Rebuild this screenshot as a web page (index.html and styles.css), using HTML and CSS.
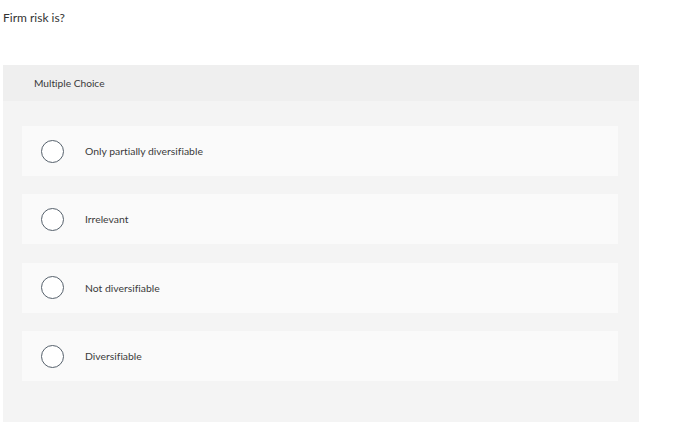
FILE: index.html
```html
<!DOCTYPE html>
<html>
<head>
<meta charset="utf-8">
<link rel="stylesheet" href="styles.css">
</head>
<body>
<p class="question">Firm risk is?</p>
<div class="panel">
  <div class="panel-head">Multiple Choice</div>
  <div class="options">
    <div class="option"><span class="radio"></span><span class="label">Only partially diversifiable</span></div>
    <div class="option"><span class="radio"></span><span class="label">Irrelevant</span></div>
    <div class="option"><span class="radio"></span><span class="label">Not diversifiable</span></div>
    <div class="option"><span class="radio"></span><span class="label">Diversifiable</span></div>
  </div>
</div>
</body>
</html>
```
FILE: styles.css
```css
html, body { margin: 0; padding: 0; background: #fff; }
body {
  font-family: Lato, "Open Sans", "Liberation Sans", sans-serif;
  font-variant-ligatures: none;
  color: #333;
  padding: 0 3px;
}
.question {
  margin: 0;
  padding-top: 11px;
  font-size: 12px;
  line-height: 14px;
  height: 54px;
  color: #333;
}
.panel {
  width: 636px;
  background: #f4f4f4;
  box-sizing: border-box;
  padding-bottom: 41px;
}
.panel-head {
  height: 36px;
  background: #efefef;
  font-size: 10.2px;
  display: flex;
  align-items: center;
  padding-left: 31px;
  color: #3a3a3a;
}
.options {
  display: flex;
  flex-direction: column;
  gap: 18.4px;
  padding: 25px 21px 0 19px;
}
.option {
  height: 50px;
  background: #fafafa;
  display: flex;
  align-items: center;
  padding-left: 19px;
}
.radio {
  width: 21px;
  height: 21px;
  border: 1px solid #56616c;
  border-radius: 50%;
  background: #fff;
  flex: none;
}
.label {
  margin-left: 21px;
  font-size: 10.4px;
  color: #3a3a3a;
}
```
